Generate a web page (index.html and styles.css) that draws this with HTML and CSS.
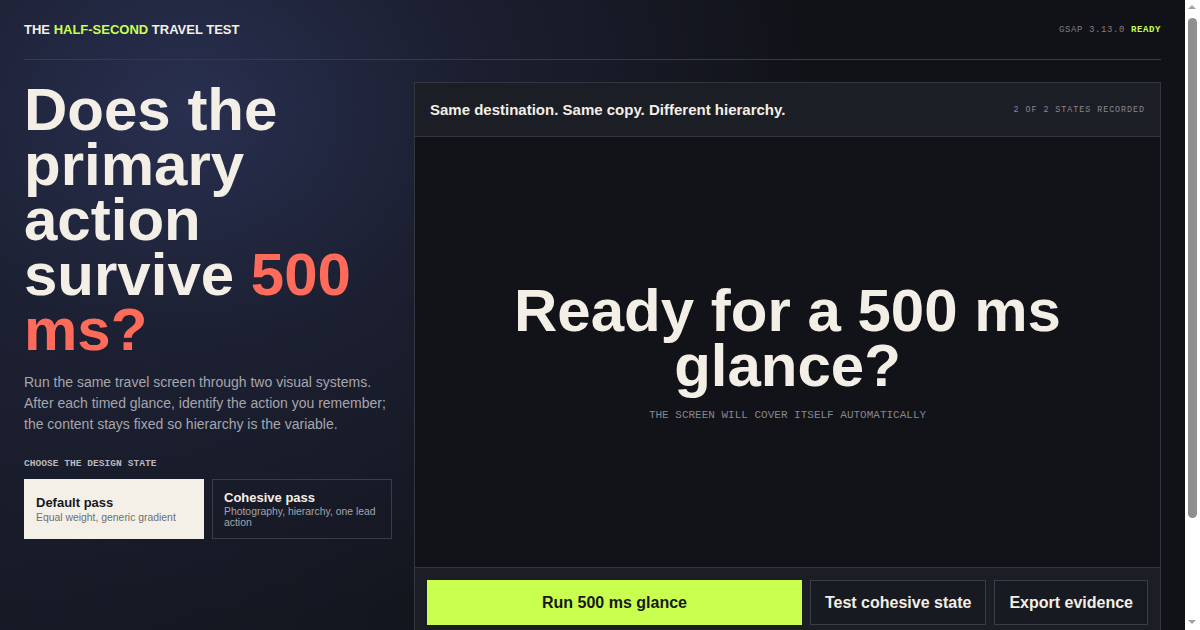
FILE: index.html
```html
<!DOCTYPE html>
<html lang="en">
<head>
<meta charset="utf-8">
<title>The Half-Second Travel Test</title>
<link rel="stylesheet" href="styles.css">
</head>
<body>
<div class="page">
  <header class="topbar">
    <div class="brand">THE <span class="lime">HALF-SECOND</span> TRAVEL TEST</div>
    <div class="status">GSAP 3.13.0 <span class="ready">READY</span></div>
  </header>
  <main class="layout">
    <section class="intro">
      <h1 class="title">Does the primary action survive <span class="coral">500 ms?</span></h1>
      <p class="lede">Run the same travel screen through two visual systems. After each timed glance, identify the action you remember; the content stays fixed so hierarchy is the variable.</p>
      <div class="label">CHOOSE THE DESIGN STATE</div>
      <div class="states">
        <button class="state active">
          <span class="state-title">Default pass</span>
          <span class="state-sub">Equal weight, generic gradient</span>
        </button>
        <button class="state">
          <span class="state-title">Cohesive pass</span>
          <span class="state-sub">Photography, hierarchy, one lead action</span>
        </button>
      </div>
    </section>
    <section class="panel">
      <div class="panel-head">
        <div class="panel-title">Same destination. Same copy. Different hierarchy.</div>
        <div class="panel-meta">2 OF 2 STATES RECORDED</div>
      </div>
      <div class="stage">
        <div class="stage-title">Ready for a 500 ms glance?</div>
        <div class="stage-sub">THE SCREEN WILL COVER ITSELF AUTOMATICALLY</div>
      </div>
      <div class="panel-foot">
        <button class="btn primary">Run 500 ms glance</button>
        <button class="btn">Test cohesive state</button>
        <button class="btn">Export evidence</button>
      </div>
    </section>
  </main>
</div>
<div class="scrollbar" aria-hidden="true">
  <span class="arrow up"></span>
  <span class="thumb"></span>
  <span class="arrow down"></span>
</div>
</body>
</html>
```

FILE: styles.css
```css
* { box-sizing: border-box; }
html, body { margin: 0; padding: 0; }
body {
  font-family: "Liberation Sans", Arial, sans-serif;
  color: #f3efe6;
  background-color: #111217;
  background-image:
    radial-gradient(ellipse 620px 520px at 190px 110px, rgba(44, 52, 88, 0.85) 0%, rgba(32, 37, 60, 0.6) 45%, rgba(17, 18, 23, 0) 100%),
    linear-gradient(90deg, #171a26 0%, #111217 70%);
  min-height: 768px;
}
.page {
  padding: 0 39px 130px 24px;
}
.topbar {
  display: flex;
  justify-content: space-between;
  align-items: center;
  height: 60px;
  border-bottom: 1px solid #3a3b42;
}
.brand {
  font-size: 13px;
  font-weight: 700;
  color: #f3efe6;
}
.lime { color: #c9ff4f; }
.status {
  font-family: "Liberation Mono", monospace;
  font-size: 9px;
  letter-spacing: 0.6px;
  color: #7d7f88;
}
.ready { color: #c9ff4f; font-weight: 700; }

.layout {
  display: grid;
  grid-template-columns: 368px 1fr;
  gap: 22px;
  padding-top: 22px;
}
.intro { padding-top: 0; }
.title {
  margin: 0;
  font-size: 60px;
  line-height: 55px;
  font-weight: 700;
  color: #f3efe6;
}
.coral { color: #ff6b5a; }
.lede {
  margin: 15px 0 0;
  font-size: 14px;
  line-height: 21px;
  color: #a6a6ae;
}
.label {
  margin-top: 23px;
  font-family: "Liberation Mono", monospace;
  font-size: 9.6px;
  font-weight: 700;
  color: #b9b9bf;
}
.states {
  display: grid;
  grid-template-columns: 1fr 1fr;
  gap: 8px;
  margin-top: 10px;
}
.state {
  display: flex;
  flex-direction: column;
  justify-content: center;
  align-items: flex-start;
  height: 60px;
  padding: 0 11px;
  text-align: left;
  font-family: "Liberation Sans", Arial, sans-serif;
  background: transparent;
  border: 1px solid #3b3d46;
  color: #f3efe6;
  cursor: pointer;
}
.state.active {
  background: #f4f0e8;
  border-color: #f4f0e8;
  color: #17181d;
}
.state-title {
  font-size: 13px;
  font-weight: 700;
  line-height: 16px;
}
.state-sub {
  margin-top: 0;
  font-size: 10.4px;
  line-height: 11.5px;
  color: #a3a4ab;
}
.state.active .state-sub { color: #6e6e70; margin-top: 1px; }

.panel {
  border: 1px solid #33353f;
  display: flex;
  flex-direction: column;
  background: #121318;
}
.panel-head {
  display: flex;
  justify-content: space-between;
  align-items: center;
  height: 54px;
  padding: 0 15px;
  background: #1c1e26;
  border-bottom: 1px solid #33353f;
}
.panel-title {
  font-size: 15px;
  font-weight: 700;
  color: #f3efe6;
}
.panel-meta {
  font-family: "Liberation Mono", monospace;
  font-size: 8.4px;
  letter-spacing: 0.95px;
  color: #868893;
}
.stage {
  height: 430px;
  display: flex;
  flex-direction: column;
  justify-content: center;
  align-items: center;
  text-align: center;
  background: #121318;
}
.stage-title {
  font-size: 60px;
  line-height: 55px;
  font-weight: 700;
  color: #f3efe6;
  max-width: 600px;
}
.stage-sub {
  margin-top: 16px;
  font-family: "Liberation Mono", monospace;
  font-size: 11px;
  color: #85868e;
}
.panel-foot {
  display: flex;
  gap: 8px;
  padding: 12px;
  background: #1c1e26;
  border-top: 1px solid #33353f;
}
.btn {
  height: 45px;
  padding: 0 14px;
  font-family: "Liberation Sans", Arial, sans-serif;
  font-size: 16px;
  font-weight: 700;
  color: #f3efe6;
  background: #181a21;
  border: 1px solid #3a3c47;
  cursor: pointer;
}
.btn.primary {
  flex: 1;
  background: #c9ff4f;
  border-color: #c9ff4f;
  color: #17181d;
}

.scrollbar {
  position: fixed;
  top: 0;
  right: 0;
  width: 15px;
  height: 100vh;
  background: #ffffff;
}
.thumb {
  position: absolute;
  left: 3px;
  top: 18px;
  width: 9px;
  height: 500px;
  border-radius: 5px;
  background: #8f8f8f;
}
.arrow {
  position: absolute;
  left: 3px;
  width: 0;
  height: 0;
  border-left: 4.5px solid transparent;
  border-right: 4.5px solid transparent;
}
.arrow.up {
  top: 5px;
  border-bottom: 4px solid #a3a3a3;
}
.arrow.down {
  bottom: 6px;
  border-top: 4px solid #a3a3a3;
}
```
